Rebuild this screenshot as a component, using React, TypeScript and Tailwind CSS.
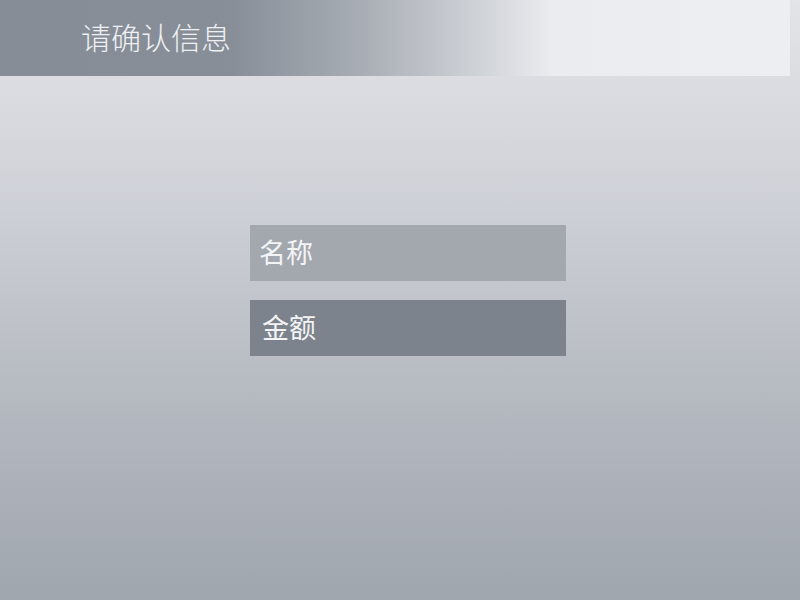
import React from "react";

export default function App() {
  const font = { fontFamily: '"Noto Sans CJK SC", "Noto Sans", sans-serif' };
  return (
    <div
      className="w-[800px] h-[600px] flex flex-col bg-[linear-gradient(to_bottom,#e3e4e8_0%,#cdd0d6_35%,#b6bac1_65%,#a0a6ae_100%)]"
      style={font}
    >
      <div className="w-[790px] h-[76px] flex items-center pl-[81px] pb-[5px] bg-[linear-gradient(to_right,#868d97_0%,#878e98_29%,#a9aeb5_46%,#d3d6db_62%,#eaecf0_70%,#eceef2_100%)]">
        <span className="text-[30px] leading-none text-[#eef0f3] font-light">请确认信息</span>
      </div>
      <div className="flex flex-col items-start pl-[250px] pt-[149px] gap-[19px]">
        <div className="w-[316px] h-[56px] bg-[#a3a7ae] flex items-center pl-[9px] pb-[3px]">
          <span className="text-[27px] leading-none text-[#f3f4f6]">名称</span>
        </div>
        <div className="w-[316px] h-[56px] bg-[#7c838d] flex items-center pl-[12px] pb-[3px]">
          <span className="text-[27px] leading-none text-[#f3f4f6]">金额</span>
        </div>
      </div>
    </div>
  );
}
